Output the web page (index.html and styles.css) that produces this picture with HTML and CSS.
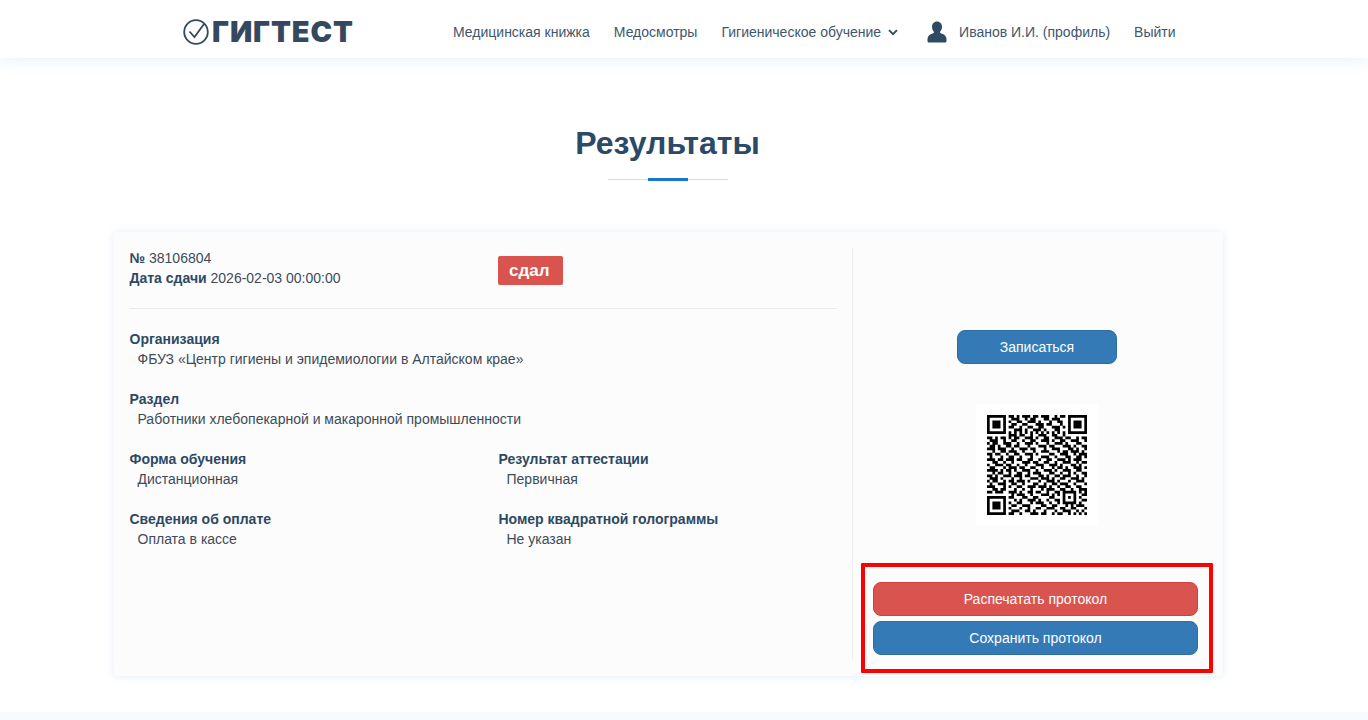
FILE: index.html
```html
<!DOCTYPE html>
<html lang="ru">
<head>
<meta charset="utf-8">
<title>Результаты</title>
<link rel="stylesheet" href="styles.css">
</head>
<body>
<header class="nav">
  <a class="logo">
    <svg class="logo-mark" viewBox="0 0 26 26" width="26" height="26"><circle cx="13" cy="13" r="11.8" fill="none" stroke="#34495e" stroke-width="1.8"/><path d="M6.5 12.5l5 5.5L21 5" fill="none" stroke="#34495e" stroke-width="1.8"/></svg>
    <span class="logo-text">ГИГТЕСТ</span>
  </a>
  <nav class="menu">
    <a class="menu-item">Медицинская книжка</a>
    <a class="menu-item">Медосмотры</a>
    <a class="menu-item menu-drop">Гигиеническое обучение
      <svg class="chev" viewBox="0 0 10 7" width="10" height="7"><path d="M1 1.2l4 4 4-4" fill="none" stroke="#2f4a63" stroke-width="1.9"/></svg>
    </a>
    <a class="menu-item menu-user">
      <svg class="user-icon" viewBox="0 0 20 22" width="20" height="22"><path d="M10 0.5c3 0 5 2.4 5 5.4 0 2-.9 3.9-2.2 5 .3.9 1 1.4 2.200 1.900 2.700 1 4.500 2.300 4.500 5.400v1.800c0 1-.7 1.500-1.500 1.500H2c-.9 0-1.500-.6-1.500-1.500v-1.800c0-3 1.800-4.400 4.500-5.400 1.200-.5 1.900-1 2.200-1.900C5.900 9.800 5 7.900 5 5.900 5 2.900 7 .5 10 .5z" fill="#2f4a63"/></svg>
      Иванов И.И. (профиль)
    </a>
    <a class="menu-item">Выйти</a>
  </nav>
</header>

<main class="page">
  <h1 class="title">Результаты</h1>
  <div class="rule"><span class="rule-accent"></span></div>

  <section class="card">
    <div class="details">
      <div class="summary">
        <div>
          <div class="line"><b>№</b> 38106804</div>
          <div class="line"><b>Дата сдачи</b> 2026-02-03 00:00:00</div>
        </div>
        <span class="badge">сдал</span>
      </div>
      <hr class="sep">
      <div class="field"><div class="label">Организация</div><div class="value">ФБУЗ «Центр гигиены и эпидемиологии в Алтайском крае»</div></div>
      <div class="field"><div class="label">Раздел</div><div class="value">Работники хлебопекарной и макаронной промышленности</div></div>
      <div class="pair">
        <div class="field"><div class="label">Форма обучения</div><div class="value">Дистанционная</div></div>
        <div class="field"><div class="label">Результат аттестации</div><div class="value">Первичная</div></div>
      </div>
      <div class="pair">
        <div class="field"><div class="label">Сведения об оплате</div><div class="value">Оплата в кассе</div></div>
        <div class="field"><div class="label">Номер квадратной голограммы</div><div class="value">Не указан</div></div>
      </div>
    </div>

    <aside class="side">
      <button class="btn btn-blue btn-enroll">Записаться</button>
      <div class="qr">
        <svg viewBox="0 0 37 37" width="100" height="100"><path fill="none" stroke="#000" stroke-width="1" d="M0 .5h7M8 .5h2M11 .5h1M13 .5h3M17 .5h2M20 .5h3M25 .5h1M27 .5h2M30 .5h7
M0 1.500h1M6 1.500h1M9 1.500h3M14 1.500h1M16 1.500h2M21 1.500h2M24 1.500h3M30 1.500h1M36 1.500h1
M0 2.500h1M2 2.500h3M6 2.500h1M8 2.500h1M11 2.500h2M15 2.500h3M19 2.500h1M23 2.500h1M26 2.500h2M30 2.500h1M32 2.500h3M36 2.500h1
M0 3.500h1M2 3.500h3M6 3.500h1M9 3.500h2M13 3.500h2M18 3.500h3M22 3.500h2M27 3.500h1M30 3.500h1M32 3.500h3M36 3.500h1
M0 4.500h1M2 4.500h3M6 4.500h1M8 4.500h2M12 4.500h1M15 4.500h2M19 4.500h2M24 4.500h3M28 4.500h1M30 4.500h1M32 4.500h3M36 4.500h1
M0 5.500h1M6 5.500h1M10 5.500h3M14 5.500h1M17 5.500h3M21 5.500h1M25 5.500h2M30 5.500h1M36 5.500h1
M0 6.500h7M8 6.500h1M10 6.500h1M12 6.500h1M14 6.500h1M16 6.500h1M18 6.500h1M20 6.500h1M22 6.500h1M24 6.500h1M26 6.500h1M28 6.500h1M30 6.500h7
M8 7.500h3M12 7.500h2M16 7.500h1M19 7.500h3M24 7.500h2M28 7.500h1
M0 8.500h2M3 8.500h1M5 8.500h2M8 8.500h1M10 8.500h2M14 8.500h3M18 8.500h1M21 8.500h2M25 8.500h3M29 8.500h2M33 8.500h1M35 8.500h2
M1 9.500h3M6 9.500h1M9 9.500h2M13 9.500h1M16 9.500h2M20 9.500h3M24 9.500h1M27 9.500h2M31 9.500h3M36 9.500h1
M0 10.500h1M2 10.500h2M6 10.500h3M11 10.500h1M14 10.500h3M18 10.500h1M22 10.500h1M25 10.500h3M29 10.500h1M33 10.500h2
M1 11.500h2M4 11.500h1M7 11.500h2M10 11.500h2M15 11.500h1M19 11.500h3M23 11.500h2M28 11.500h3M32 11.500h1M35 11.500h2
M0 12.500h3M4 12.500h3M9 12.500h1M12 12.500h3M16 12.500h2M21 12.500h1M24 12.500h3M30 12.500h2M33 12.500h1M36 12.500h1
M2 13.500h1M5 13.500h2M8 13.500h3M13 13.500h1M17 13.500h1M20 13.500h3M26 13.500h1M28 13.500h2M31 13.500h3M35 13.500h1
M0 14.500h2M3 14.500h2M7 14.500h1M10 14.500h2M14 14.500h3M18 14.500h1M23 14.500h2M27 14.500h3M32 14.500h1M34 14.500h3
M1 15.500h1M5 15.500h1M8 15.500h2M12 15.500h1M16 15.500h1M20 15.500h3M25 15.500h1M29 15.500h2M33 15.500h2M36 15.500h1
M0 16.500h3M4 16.500h2M7 16.500h3M11 16.500h2M15 16.500h2M19 16.500h1M22 16.500h2M26 16.500h3M30 16.500h1M32 16.500h3
M2 17.500h2M6 17.500h1M9 17.500h1M13 17.500h3M17 17.500h2M21 17.500h2M25 17.500h1M28 17.500h3M33 17.500h1M35 17.500h2
M0 18.500h1M3 18.500h3M7 18.500h2M11 18.500h1M14 18.500h1M18 18.500h3M23 18.500h3M27 18.500h1M31 18.500h2M34 18.500h1
M1 19.500h2M6 19.500h1M8 19.500h3M12 19.500h2M16 19.500h2M20 19.500h1M24 19.500h1M26 19.500h2M29 19.500h1M32 19.500h3M36 19.500h1
M0 20.500h4M5 20.500h1M7 20.500h2M10 20.500h1M13 20.500h3M18 20.500h1M21 20.500h3M25 20.500h1M28 20.500h3M33 20.500h2
M2 21.500h1M4 21.500h2M8 21.500h1M11 21.500h2M15 21.500h1M17 21.500h3M23 21.500h2M27 21.500h1M30 21.500h1M32 21.500h1M35 21.500h2
M0 22.500h2M3 22.500h1M6 22.500h3M10 22.500h3M14 22.500h2M19 22.500h2M22 22.500h1M25 22.500h2M28 22.500h3M33 22.500h1M36 22.500h1
M1 23.500h3M5 23.500h1M9 23.500h1M12 23.500h1M16 23.500h3M20 23.500h3M24 23.500h1M27 23.500h2M31 23.500h3M35 23.500h1
M0 24.500h1M2 24.500h2M6 24.500h1M8 24.500h2M11 24.500h3M15 24.500h1M19 24.500h1M22 24.500h3M26 24.500h1M30 24.500h1M33 24.500h3
M1 25.500h1M4 25.500h3M9 25.500h2M13 25.500h1M17 25.500h2M21 25.500h1M24 25.500h2M27 25.500h3M32 25.500h1M36 25.500h1
M0 26.500h3M6 26.500h1M8 26.500h1M11 26.500h2M15 26.500h3M19 26.500h3M23 26.500h1M26 26.500h1M29 26.500h2M33 26.500h2
M2 27.500h2M5 27.500h2M10 27.500h1M13 27.500h1M16 27.500h1M20 27.500h1M22 27.500h3M27 27.500h2M31 27.500h1M34 27.500h3
M0 28.500h2M3 28.500h3M8 28.500h3M12 28.500h1M15 28.500h2M18 28.500h2M22 28.500h1M25 28.500h2M28 28.500h5M34 28.500h1M36 28.500h1
M9 29.500h1M11 29.500h3M16 29.500h1M20 29.500h3M24 29.500h1M26 29.500h1M28 29.500h1M32 29.500h1M35 29.500h2
M0 30.500h7M8 30.500h2M13 30.500h2M17 30.500h2M23 30.500h2M28 30.500h1M30 30.500h1M32 30.500h1M34 30.500h1
M0 31.500h1M6 31.500h1M10 31.500h1M12 31.500h1M15 31.500h3M19 31.500h1M22 31.500h1M25 31.500h2M28 31.500h1M32 31.500h1M35 31.500h2
M0 32.500h1M2 32.500h3M6 32.500h1M8 32.500h1M11 32.500h2M16 32.500h1M18 32.500h3M23 32.500h1M26 32.500h1M28 32.500h5M34 32.500h1
M0 33.500h1M2 33.500h3M6 33.500h1M9 33.500h2M13 33.500h3M20 33.500h2M24 33.500h2M29 33.500h1M31 33.500h1M33 33.500h3
M0 34.500h1M2 34.500h3M6 34.500h1M8 34.500h1M12 34.500h1M15 34.500h1M18 34.500h2M22 34.500h3M27 34.500h2M31 34.500h2M36 34.500h1
M0 35.500h1M6 35.500h1M9 35.500h3M14 35.500h2M17 35.500h1M21 35.500h1M25 35.500h1M28 35.500h3M33 35.500h1M35 35.500h1
M0 36.500h7M8 36.500h2M12 36.500h1M16 36.500h3M20 36.500h2M24 36.500h1M26 36.500h2M30 36.500h1M32 36.500h1M34 36.500h1M36 36.500h1"/></svg>
      </div>
      <div class="protocol">
        <button class="btn btn-red">Распечатать протокол</button>
        <button class="btn btn-blue">Сохранить протокол</button>
        <span class="highlight"></span>
      </div>
    </aside>
  </section>
</main>
<footer class="foot"></footer>
</body>
</html>
```

FILE: styles.css
```css
* { box-sizing: border-box; }
html, body { margin: 0; height: 100%; }
body {
  background: #fff;
  color: #3d4b59;
  font-family: "Liberation Sans", Arial, sans-serif;
  font-size: 14px;
  line-height: 20px;
  overflow: hidden;
}
.nav {
  display: flex;
  align-items: center;
  height: 58px;
  padding: 6px 0 0 183px;
  background: #fff;
  box-shadow: 0 2px 15px rgba(25, 119, 204, 0.1);
}
.logo { display: flex; align-items: center; width: 270px; }
.logo-mark { flex: none; }
.logo-text {
  margin-left: 3px;
  font-family: Inter, "Liberation Sans", sans-serif;
  font-weight: 900;
  font-size: 29px;
  line-height: 32px;
  letter-spacing: 0.9px;
  color: #34495e;
}
.menu { display: flex; align-items: center; gap: 24px; }
.menu-item { color: #40566e; white-space: nowrap; display: flex; align-items: center; }
.chev { margin-left: 7px; }
.menu-drop { margin-right: 5px; }
.user-icon { margin-right: 12px; }

.page { width: 1109px; margin-left: 114px; }
.title {
  margin: 67px 0 0;
  padding-right: 2px;
  text-align: center;
  font-size: 32px;
  line-height: 36px;
  font-weight: 700;
  color: #2a4a68;
}
.rule {
  position: relative;
  width: 120px;
  height: 1px;
  margin: 18px 0 0 494px;
  background: #ddd;
}
.rule-accent {
  position: absolute;
  left: 40px;
  top: -1px;
  width: 40px;
  height: 3px;
  background: #1977cc;
}
.card {
  display: flex;
  margin: 52px 0 36px;
  padding: 16px 0;
  background: #fcfcfc;
  box-shadow: 0 0 8px rgba(25, 119, 204, 0.12);
}
.details { width: 739px; padding: 0 15px 0 15.5px; border-right: 1px solid #eee; }
.summary { display: flex; height: 40px; }
.summary > div:first-child { width: 368.5px; }
.line { height: 20px; }
.line b, .label { color: #2c4964; font-weight: 700; }
.badge {
  height: 29px;
  margin-top: 8px;
  padding: 0 12px 0 11px;
  width: 65px;
  background: #d9534f;
  color: #fff;
  border-radius: 2px;
  font-weight: 700;
  font-size: 17px;
  line-height: 29px;
}
.sep { margin: 20px 0; border: 0; border-top: 1px solid #eaeaea; height: 0; }
.field { margin-bottom: 20px; }
.value { padding-left: 8px; }
.pair { display: grid; grid-template-columns: 369px 1fr; }

.side {
  flex: 1;
  height: 412px;
  display: flex;
  flex-direction: column;
  align-items: center;
  padding: 82px 2px 0 0;
}
.btn {
  display: block;
  height: 34px;
  padding: 0 0 0 1px;
  border-radius: 8px;
  border: 1px solid;
  color: #fff;
  font: 14px/20px "Liberation Sans", Arial, sans-serif;
}
.btn-blue { background: #337ab7; border-color: #2e6da4; }
.btn-red { background: #d9534f; border-color: #d43f3a; }
.btn-enroll { width: 160px; padding: 0; }
.qr {
  width: 122px;
  height: 122px;
  margin-top: 40px;
  background: #fff;
  display: flex;
  align-items: center;
  justify-content: center;
}
.protocol {
  position: relative;
  display: flex;
  flex-direction: column;
  gap: 5px;
  width: 325px;
  margin: 56px 4px 0 0;
}
.highlight {
  position: absolute;
  left: -12px;
  top: -19px;
  width: 352px;
  height: 110px;
  border: 4px solid #f00;
  border-radius: 1px;
}
.foot { height: 10px; background: #f9fafe; }
```
